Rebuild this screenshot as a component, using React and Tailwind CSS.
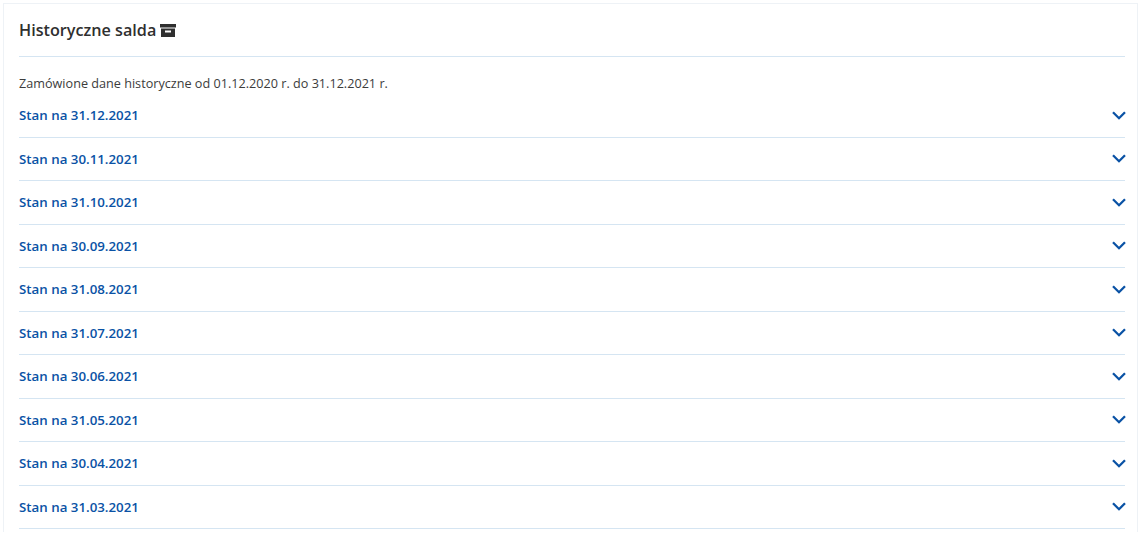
const balances = [
  '31.12.2021',
  '30.11.2021',
  '31.10.2021',
  '30.09.2021',
  '31.08.2021',
  '31.07.2021',
  '30.06.2021',
  '31.05.2021',
  '30.04.2021',
  '31.03.2021',
];

const ArchiveIcon = () => (
  <svg className="w-4 h-4 ml-[4px] text-[#2f2f2f]" viewBox="0 0 16 16" fill="currentColor">
    <path d="M0 2h16v3.5H0z" />
    <path fillRule="evenodd" d="M1 6.5h14V15H1zM5 8.5v2h6v-2z" />
  </svg>
);

const Chevron = () => (
  <svg className="w-[14px] h-[9px] -mr-[1px] text-[#0a52a5]" viewBox="0 0 14 9" fill="none" stroke="currentColor" strokeWidth="2.3">
    <path d="M1 1.2l6 6 6-6" />
  </svg>
);

const App = () => {
  return (
    <div className="h-[538px] bg-white overflow-hidden pt-[3px] pl-[3px] font-['Open_Sans',sans-serif]">
      <div className="w-[1135px] h-[529px] border-t border-l border-r border-[#eef2f6] px-[15px] overflow-hidden">
        <div className="w-[1106px]">
          {/* Header */}
          <div className="h-[53px] flex items-center border-b border-[#d5e5f2]">
            <h2 className="text-[16.2px] font-semibold text-[#2f2f2f] leading-none">Historyczne salda</h2>
            <ArchiveIcon />
          </div>

          <p className="mt-[17px] text-[12.65px] leading-[18px] text-[#3c3c3c]">
            Zamówione dane historyczne od 01.12.2020 r. do 31.12.2021 r.
          </p>

          {/* Rows */}
          <div className="mt-[2px]">
            {balances.map((date) => (
              <div
                key={date}
                className="h-[43.5px] flex items-center justify-between border-b border-[#d5e5f2]"
              >
                <span className="pt-[2px] text-[13.3px] font-semibold text-[#0a52a5]">Stan na {date}</span>
                <Chevron />
              </div>
            ))}
          </div>
        </div>
      </div>
    </div>
  );
};

export default App;
